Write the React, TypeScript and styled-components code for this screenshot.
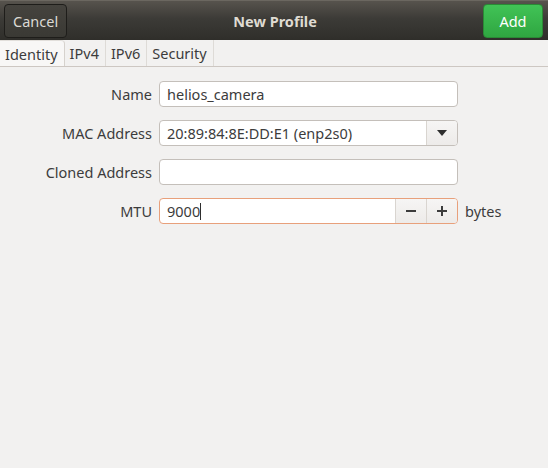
import React from 'react'
import styled, { createGlobalStyle } from 'styled-components'

const GlobalStyle = createGlobalStyle`
  html, body {
    margin: 0;
    padding: 0;
    background: #f2f1f0;
    font-family: 'Noto Sans', 'Open Sans', sans-serif;
    font-size: 14.5px;
    color: #3c3c3c;
  }
`

const Window = styled.div`
  width: 548px;
  height: 468px;
  display: flex;
  flex-direction: column;
  background: #f2f1f0;
  overflow: hidden;
`

const HeaderBar = styled.header`
  height: 40px;
  flex: none;
  display: flex;
  align-items: center;
  justify-content: space-between;
  padding: 0 5px 0 4px;
  background: linear-gradient(#57534d, #3c3b37 45%, #2f2e2a);
  border-top: 1px solid #6b6760;
  box-sizing: border-box;
`

const HeaderButton = styled.button<{ $suggested?: boolean }>`
  height: 34px;
  min-width: 60px;
  padding: 0 8px;
  border-radius: 4px;
  font-family: inherit;
  font-size: 14.5px;
  cursor: pointer;
  border: 1px solid ${(p) => (p.$suggested ? '#2a8a35' : '#1e1d1a')};
  background: ${(p) =>
    p.$suggested ? 'linear-gradient(#41c356, #2fa641)' : 'linear-gradient(#45433e, #3a3934)'};
  color: ${(p) => (p.$suggested ? '#ffffff' : '#dcdad5')};
`

const Title = styled.h1`
  margin: 0;
  font-size: 14.5px;
  font-weight: 700;
  color: #dfdbd2;
`

const TabStrip = styled.nav`
  height: 27px;
  flex: none;
  display: flex;
  align-items: flex-end;
  border-bottom: 1px solid #cdc7c2;
  box-sizing: border-box;
`

const Tab = styled.div<{ $active?: boolean }>`
  height: 26px;
  display: flex;
  align-items: center;
  padding: 0 6px 0 5px;
  box-sizing: border-box;
  border-right: 1px solid #dedbd7;
  background: ${(p) => (p.$active ? '#f8f7f6' : 'transparent')};
  border-top-right-radius: ${(p) => (p.$active ? '4px' : '0')};
  ${(p) => (p.$active ? 'border-right-color: #d6d2cd; border-top: 1px solid #e2dfdb;' : '')}
  color: #3c3c3c;
`

const Form = styled.section`
  display: grid;
  grid-template-columns: 152px 299px auto;
  column-gap: 7px;
  row-gap: 13px;
  align-items: center;
  padding-top: 14px;
`

const Label = styled.label`
  text-align: right;
  color: #3c3c3c;
`

const Field = styled.div<{ $focused?: boolean }>`
  height: 26px;
  display: flex;
  align-items: stretch;
  box-sizing: border-box;
  border: 1px solid ${(p) => (p.$focused ? '#e8a07b' : '#c4bfba')};
  border-radius: 4px;
  background: #ffffff;
  overflow: hidden;
`

const FieldText = styled.div`
  flex: 1;
  display: flex;
  align-items: center;
  padding: 0 7px;
  color: #3c3c3c;
  white-space: nowrap;
`

const Caret = styled.span`
  display: inline-block;
  width: 1px;
  height: 17px;
  background: #2e2e2e;
`

const SideButton = styled.div`
  width: 30px;
  flex: none;
  display: flex;
  align-items: center;
  justify-content: center;
  border-left: 1px solid #d9d5d0;
  background: linear-gradient(#f6f5f4, #edebe9);
  color: #3c3c3c;
`

const Unit = styled.span`
  color: #3c3c3c;
`

const MinusIcon = () => (
  <svg width="12" height="12" viewBox="0 0 12 12">
    <rect x="1" y="5" width="10" height="2" fill="#3c3c3c" />
  </svg>
)

const PlusIcon = () => (
  <svg width="12" height="12" viewBox="0 0 12 12">
    <rect x="1" y="5" width="10" height="2" fill="#3c3c3c" />
    <rect x="5" y="1" width="2" height="10" fill="#3c3c3c" />
  </svg>
)

const DropIcon = () => (
  <svg width="10" height="6" viewBox="0 0 10 6">
    <path d="M0 0 H10 L5 6 Z" fill="#2e2e2e" />
  </svg>
)

const App = () => (
  <Window>
    <GlobalStyle />
    <HeaderBar>
      <HeaderButton>Cancel</HeaderButton>
      <Title>New Profile</Title>
      <HeaderButton $suggested>Add</HeaderButton>
    </HeaderBar>
    <TabStrip>
      <Tab $active>Identity</Tab>
      <Tab>IPv4</Tab>
      <Tab>IPv6</Tab>
      <Tab>Security</Tab>
    </TabStrip>
    <Form>
      <Label>Name</Label>
      <Field>
        <FieldText>helios_camera</FieldText>
      </Field>
      <span />

      <Label>MAC Address</Label>
      <Field>
        <FieldText>20:89:84:8E:DD:E1 (enp2s0)</FieldText>
        <SideButton>
          <DropIcon />
        </SideButton>
      </Field>
      <span />

      <Label>Cloned Address</Label>
      <Field>
        <FieldText />
      </Field>
      <span />

      <Label>MTU</Label>
      <Field $focused>
        <FieldText>
          9000
          <Caret />
        </FieldText>
        <SideButton>
          <MinusIcon />
        </SideButton>
        <SideButton>
          <PlusIcon />
        </SideButton>
      </Field>
      <Unit>bytes</Unit>
    </Form>
  </Window>
)

export default App
